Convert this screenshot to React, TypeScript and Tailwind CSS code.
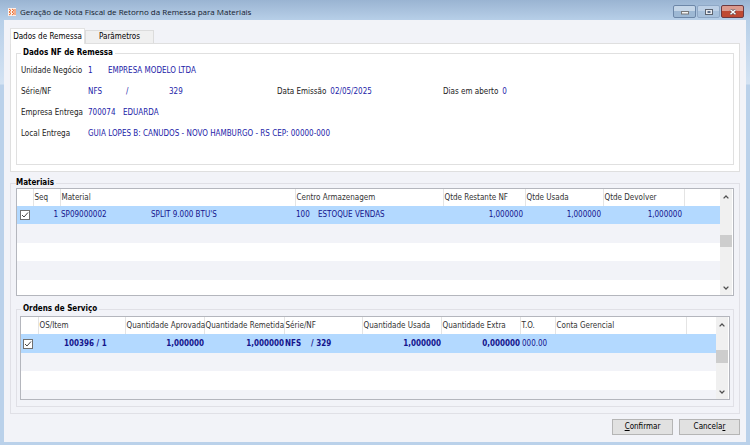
import { useState, type ReactNode } from "react";

const checkboxClass =
    "[grid-area:1/1] block h-[10px] w-[10px] appearance-none border border-[#707070] bg-white";

function CheckCell({ label }: { label: string }) {
    const [checked, setChecked] = useState(true);
    return (
        <label className="grid w-[10px]">
            <input
                type="checkbox"
                aria-label={label}
                checked={checked}
                onChange={(e) => setChecked(e.target.checked)}
                className={checkboxClass}
            />
            {checked && (
                <svg viewBox="0 0 10 10" className="pointer-events-none [grid-area:1/1] h-[10px] w-[10px]">
                    <path d="M2 5l2 2 4-4.5" fill="none" stroke="#444" strokeWidth="1" />
                </svg>
            )}
        </label>
    );
}

function Scrollbar({ thumb }: { thumb: string }) {
    return (
        <div className="flex w-[12px] shrink-0 flex-col bg-[#f0f0f0]">
            <button type="button" aria-label="Rolar para cima" className="flex h-4 items-center justify-center">
                <svg viewBox="0 0 6 4" className="h-1 w-1.5">
                    <path d="M.6 3.4L3 1l2.4 2.4" fill="none" stroke="#505050" strokeWidth="1.3" />
                </svg>
            </button>
            <div className="flex flex-1 flex-col">
                <div className={thumb} />
            </div>
            <button type="button" aria-label="Rolar para baixo" className="flex h-3.5 items-center justify-center">
                <svg viewBox="0 0 6 4" className="h-1 w-1.5">
                    <path d="M.6 .6L3 3l2.4-2.4" fill="none" stroke="#505050" strokeWidth="1.3" />
                </svg>
            </button>
        </div>
    );
}

const dt = "whitespace-nowrap text-[#222]";

function Field({ label, children }: { label: string; children: ReactNode }) {
    return (
        <div className="flex h-[21px] items-center">
            <dt className={`${dt} w-[67px] shrink-0`}>{label}</dt>
            <dd className="flex flex-1 text-[#1c1ca8]">{children}</dd>
        </div>
    );
}

const th =
    "h-[17px] border-r border-[#e4e4e4] p-0 pl-px text-left font-normal whitespace-nowrap text-[#333]";
const num = "p-0 pr-0.5 text-right";
const numBold = "p-0 text-right";
const footerButton = "h-4 w-[61px] border border-[#b5b5b5] bg-[#e1e1e1]";

export default function App() {
    return (
        <div className="flex flex-col bg-[linear-gradient(#b7cfe8_20px,#d4e3f3_84px,#bad1ea_85px)] px-1 pb-[3px] font-['DejaVu_Sans_Condensed','DejaVu_Sans',sans-serif] text-[8px] leading-[10px]">
            <header className="-mx-1 flex h-5 items-center bg-linear-to-b from-[#9ab4d2] to-[#b7cfe8] pr-1.5 pl-2">
                <svg viewBox="0 0 8 8" className="mt-1 h-2 w-2">
                    <rect width="8" height="8" fill="#fdf0e9" />
                    <path d="M1 1l2 1.5L1 4l2 1.5L1 7M4 1l2 1.5L4 4l2 1.5L4 7M7 1v6" fill="none" stroke="#e8692c" strokeWidth="1" />
                </svg>
                <h1 className="flex-1 pt-1 pl-1 font-['Open_Sans',sans-serif] text-[8px] leading-3 text-[#14202e]">
                    Geração de Nota Fiscal de Retorno da Remessa para Materiais
                </h1>
                <div className="flex gap-px pt-[3px]">
                    <button type="button" aria-label="Minimizar" className="flex h-[13px] w-[23px] items-center justify-center rounded-xs border border-[#6d87a8] bg-linear-to-b from-[#c5d6e8] from-50% to-[#9db8d4] to-50%">
                        <svg viewBox="0 0 8 4" className="mt-0.5 h-1 w-2">
                            <rect x=".5" y=".5" width="7" height="2.5" fill="#f4f4f4" stroke="#777" />
                        </svg>
                    </button>
                    <button type="button" aria-label="Maximizar" className="flex h-[13px] w-[23px] items-center justify-center rounded-xs border border-[#8fa8c6] bg-linear-to-b from-[#bdd0e6] from-50% to-[#a8c1dc] to-50%">
                        <svg viewBox="0 0 8 6" className="h-1.5 w-2">
                            <rect x=".5" y=".5" width="7" height="5" fill="#e8ebf0" stroke="#5d6470" />
                            <rect x="2.5" y="2" width="3" height="2" fill="#5d6f8a" />
                        </svg>
                    </button>
                    <button type="button" aria-label="Fechar" className="flex h-[13px] w-[23px] items-center justify-center rounded-xs border border-[#6d3a40] bg-linear-to-b from-[#dc9a8e] from-50% to-[#bf4a33] to-50%">
                        <svg viewBox="0 0 8 6" className="h-1.5 w-2">
                            <path d="M1.5 .5l5 5m0-5l-5 5" stroke="#5a4a50" strokeWidth="2.6" />
                            <path d="M1.5 .8l5 4.4m0-4.4l-5 4.4" stroke="#fff" strokeWidth="1.5" />
                        </svg>
                    </button>
                </div>
            </header>

            <main className="flex flex-col bg-[#f2f3f8] px-1.5 pt-2 pb-[7px]">
                <div role="tablist" className="flex items-end">
                    <button type="button" role="tab" aria-selected="true" className="z-10 -mb-px h-4 w-[75px] border border-b-0 border-[#e2e2e2] bg-white whitespace-nowrap">
                        Dados de Remessa
                    </button>
                    <button type="button" role="tab" aria-selected="false" className="h-[13px] w-[69px] border border-b-0 border-[#dcdcdc] bg-[#f0f0f0]">
                        Parâmetros
                    </button>
                </div>
                <section role="tabpanel" className="border border-[#dfdfdf] bg-white px-[5px] pt-1 pb-1.5">
                    <fieldset className="h-[117px] min-w-0 border border-[#e0e0e0] px-1">
                        <legend className="px-0.5 font-bold text-black">Dados NF de Remessa</legend>
                        <dl className="pt-0.5">
                            <Field label="Unidade Negócio">
                                <span className="w-5">1</span>
                                <span>EMPRESA MODELO LTDA</span>
                            </Field>
                            <div className="flex">
                                <div className="w-64">
                                    <Field label="Série/NF">
                                        <span className="w-[38px]">NFS</span>
                                        <span className="w-[43px]">/</span>
                                        <span>329</span>
                                    </Field>
                                </div>
                                <div className="flex w-[166px] items-center gap-1">
                                    <dt className={dt}>Data Emissão</dt>
                                    <dd className="text-[#1c1ca8]">02/05/2025</dd>
                                </div>
                                <div className="flex items-center gap-1">
                                    <dt className={dt}>Dias em aberto</dt>
                                    <dd className="text-[#1c1ca8]">0</dd>
                                </div>
                            </div>
                            <Field label="Empresa Entrega">
                                <span className="w-[35px]">700074</span>
                                <span>EDUARDA</span>
                            </Field>
                            <Field label="Local Entrega">GUIA LOPES B: CANUDOS - NOVO HAMBURGO - RS CEP: 00000-000</Field>
                        </dl>
                    </fieldset>
                </section>

                <fieldset className="mt-1.5 min-w-0 border border-[#e0e0e6] px-[5px] pb-1.5">
                    <legend className="pr-0.5 font-bold text-black">Materiais</legend>
                    <div className="flex h-[108px] border border-[#b4b6bd] bg-white pr-px">
                        <div className="min-w-0 flex-1 overflow-hidden">
                            <table className="w-full table-fixed border-collapse">
                                <colgroup>
                                    <col className="w-4" />
                                    <col className="w-[27px]" />
                                    <col className="w-[235px]" />
                                    <col className="w-[148px]" />
                                    <col className="w-[82px]" />
                                    <col className="w-[78px]" />
                                    <col className="w-[81px]" />
                                    <col />
                                </colgroup>
                                <thead>
                                    <tr>
                                        <th className={th} />
                                        <th className={th}>Seq</th>
                                        <th className={th}>Material</th>
                                        <th className={th}>Centro Armazenagem</th>
                                        <th className={th}>Qtde Restante NF</th>
                                        <th className={th}>Qtde Usada</th>
                                        <th className={th}>Qtde Devolver</th>
                                        <th />
                                    </tr>
                                </thead>
                                <tbody>
                                    <tr className="h-[18px] bg-[#b3d9ff] text-[#14148c]">
                                        <td className="p-0 pl-[3px]"><CheckCell label="Selecionar material 1" /></td>
                                        <td className={num}>1</td>
                                        <td className="p-0 pl-px">
                                            <div className="flex">
                                                <span className="w-[90px]">SP09000002</span>
                                                <span>SPLIT 9.000 BTU'S</span>
                                            </div>
                                        </td>
                                        <td className="p-0 pl-px">
                                            <div className="flex">
                                                <span className="w-[22px]">100</span>
                                                <span>ESTOQUE VENDAS</span>
                                            </div>
                                        </td>
                                        <td className={num}>1,000000</td>
                                        <td className={num}>1,000000</td>
                                        <td className={num}>1,000000</td>
                                        <td />
                                    </tr>
                                    <tr className="h-[19px] bg-[#f2f3f8]"><td colSpan={8} /></tr>
                                    <tr className="h-[18px]"><td colSpan={8} /></tr>
                                    <tr className="h-[19px] bg-[#f2f3f8]"><td colSpan={8} /></tr>
                                </tbody>
                            </table>
                        </div>
                        <Scrollbar thumb="mt-[30px] h-3 bg-[#cdcdcd]" />
                    </div>

                    <fieldset className="mt-2 min-w-0 border border-[#e0e0e6] px-[3px] pb-1.5">
                        <legend className="mb-0.5 ml-px px-0.5 font-bold text-black">Ordens de Serviço</legend>
                        <div className="flex h-[84px] border border-[#b4b6bd] bg-white pr-px">
                            <div className="min-w-0 flex-1 overflow-hidden">
                                <table className="w-full table-fixed border-collapse">
                                    <colgroup>
                                        <col className="w-[17px]" />
                                        <col className="w-[87px]" />
                                        <col className="w-[79px]" />
                                        <col className="w-[80px]" />
                                        <col className="w-[78px]" />
                                        <col className="w-[79px]" />
                                        <col className="w-[79px]" />
                                        <col className="w-[35px]" />
                                        <col className="w-[131px]" />
                                        <col />
                                    </colgroup>
                                    <thead>
                                        <tr>
                                            <th className={th} />
                                            <th className={th}>OS/Item</th>
                                            <th className={th}>Quantidade Aprovada</th>
                                            <th className={th}>Quantidade Remetida</th>
                                            <th className={th}>Série/NF</th>
                                            <th className={th}>Quantidade Usada</th>
                                            <th className={th}>Quantidade Extra</th>
                                            <th className={th}>T.O.</th>
                                            <th className={th}>Conta Gerencial</th>
                                            <th />
                                        </tr>
                                    </thead>
                                    <tbody>
                                        <tr className="h-[19px] bg-[#b3d9ff] font-bold text-[#14148c]">
                                            <td className="p-0 pl-0.5"><CheckCell label="Selecionar ordem 100396 / 1" /></td>
                                            <td className="p-0 pl-[26px]">100396 / 1</td>
                                            <td className={numBold}>1,000000</td>
                                            <td className={numBold}>1,000000</td>
                                            <td className="p-0 pl-px">
                                                <div className="flex">
                                                    <span className="w-[26px]">NFS</span>
                                                    <span>/ 329</span>
                                                </div>
                                            </td>
                                            <td className={numBold}>1,000000</td>
                                            <td className={numBold}>0,000000</td>
                                            <td className="p-0 pl-0.5 font-normal">000.00</td>
                                            <td />
                                            <td />
                                        </tr>
                                        <tr className="h-[18px] bg-[#f2f3f8]"><td colSpan={10} /></tr>
                                        <tr className="h-[19px]"><td colSpan={10} /></tr>
                                        <tr className="h-[18px] bg-[#f2f3f8]"><td colSpan={10} /></tr>
                                    </tbody>
                                </table>
                            </div>
                            <Scrollbar thumb="mt-[17px] h-[13px] bg-[#cdcdcd]" />
                        </div>
                    </fieldset>
                </fieldset>

                <div className="mt-[5px] flex justify-end gap-1.5">
                    <button type="button" className={footerButton}><u>C</u>onfirmar</button>
                    <button type="button" className={footerButton}>Cancela<u>r</u></button>
                </div>
            </main>
        </div>
    );
}
